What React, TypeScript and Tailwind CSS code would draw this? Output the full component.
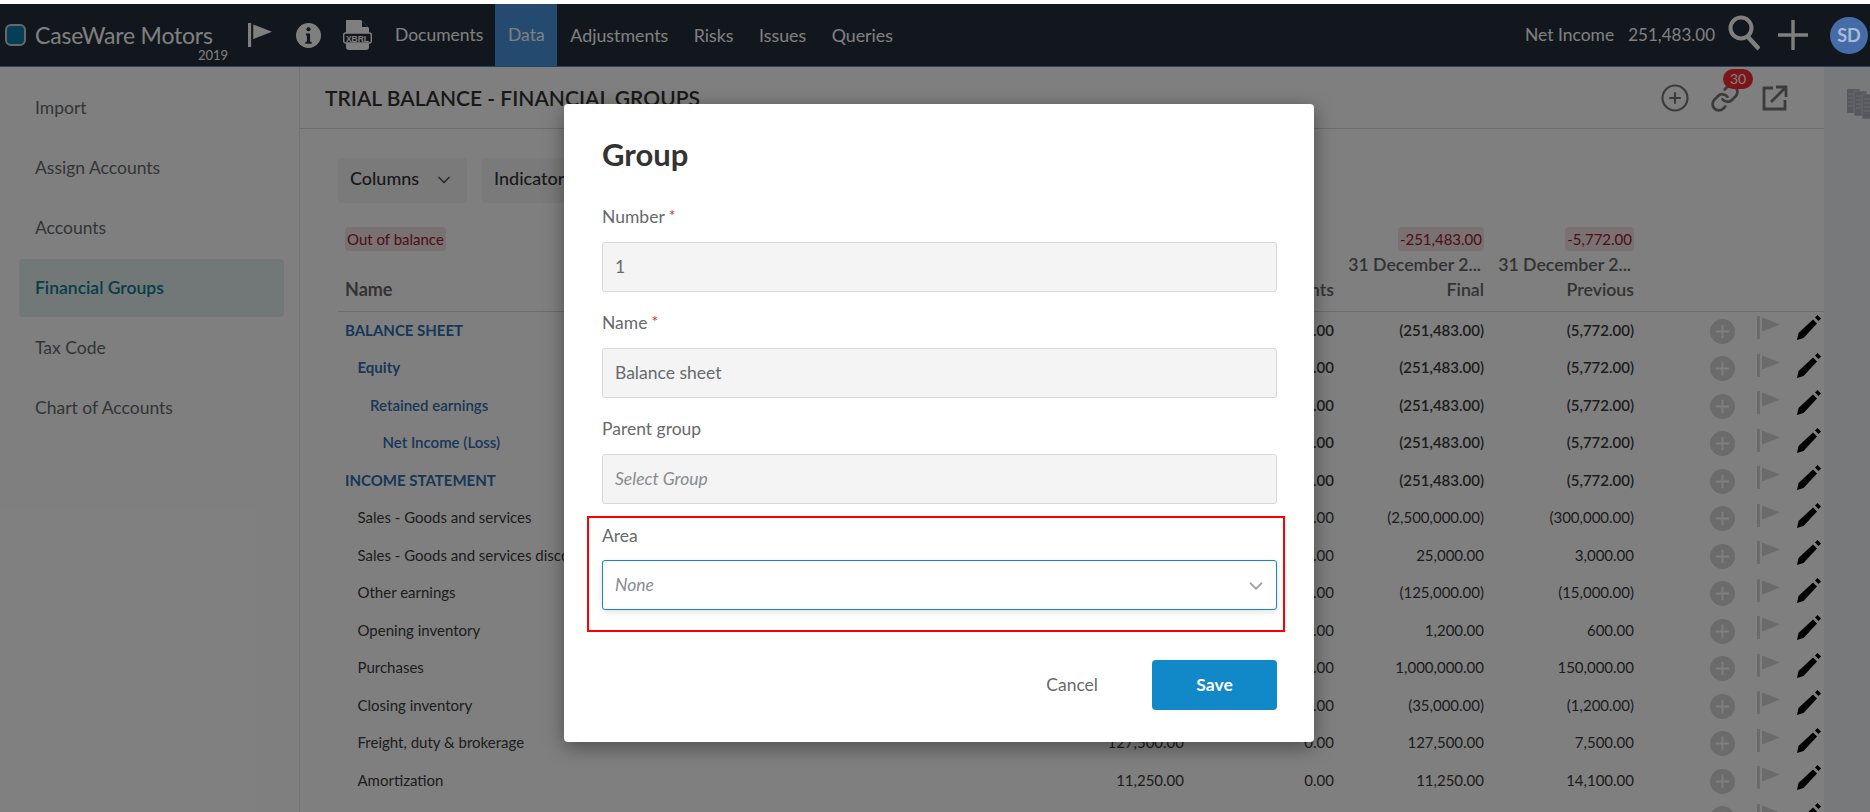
import React from 'react';
import { ChevronDown, CirclePlus, Link } from 'lucide-react';

const sideItems = ['Import', 'Assign Accounts', 'Accounts', 'Financial Groups', 'Tax Code', 'Chart of Accounts'];
const navItems = ['Adjustments', 'Risks', 'Issues', 'Queries'];

type Row = { name: string; level: number; kind: 'head' | 'sub' | 'link' | 'plain'; adj: string; final: string; prev: string; prelim?: string };

const rows: Row[] = [
  { name: 'BALANCE SHEET', level: 0, kind: 'head', adj: '0.00', final: '(251,483.00)', prev: '(5,772.00)' },
  { name: 'Equity', level: 1, kind: 'sub', adj: '0.00', final: '(251,483.00)', prev: '(5,772.00)' },
  { name: 'Retained earnings', level: 2, kind: 'link', adj: '0.00', final: '(251,483.00)', prev: '(5,772.00)' },
  { name: 'Net Income (Loss)', level: 3, kind: 'link', adj: '0.00', final: '(251,483.00)', prev: '(5,772.00)' },
  { name: 'INCOME STATEMENT', level: 0, kind: 'head', adj: '0.00', final: '(251,483.00)', prev: '(5,772.00)' },
  { name: 'Sales - Goods and services', level: 1, kind: 'plain', adj: '0.00', final: '(2,500,000.00)', prev: '(300,000.00)' },
  { name: 'Sales - Goods and services discounts', level: 1, kind: 'plain', adj: '0.00', final: '25,000.00', prev: '3,000.00' },
  { name: 'Other earnings', level: 1, kind: 'plain', adj: '0.00', final: '(125,000.00)', prev: '(15,000.00)' },
  { name: 'Opening inventory', level: 1, kind: 'plain', adj: '0.00', final: '1,200.00', prev: '600.00' },
  { name: 'Purchases', level: 1, kind: 'plain', adj: '0.00', final: '1,000,000.00', prev: '150,000.00' },
  { name: 'Closing inventory', level: 1, kind: 'plain', adj: '0.00', final: '(35,000.00)', prev: '(1,200.00)' },
  { name: 'Freight, duty & brokerage', level: 1, kind: 'plain', adj: '0.00', final: '127,500.00', prev: '7,500.00', prelim: '127,500.00' },
  { name: 'Amortization', level: 1, kind: 'plain', adj: '0.00', final: '11,250.00', prev: '14,100.00', prelim: '11,250.00' },
];

const FlagIcon = ({ className }: { className: string }) => (
  <svg viewBox="0 0 23 23" className={className} fill="currentColor">
    <rect x="0" y="0" width="3" height="23" />
    <path d="M5 1.5 L23 8.5 L5 15.5 Z" />
  </svg>
);

const DisabledPlus = () => (
  <svg viewBox="0 0 26 26" className="mt-[3px] h-[25px] w-[25px]">
    <circle cx="13" cy="13" r="13" fill="#d6d6d6" />
    <path d="M13 6v14M6 13h14" stroke="#ffffff" strokeWidth="2" />
  </svg>
);

const PencilIcon = () => (
  <svg viewBox="0 0 24 25" className="-mt-[4px] ml-[17px] h-[25px] w-[24px]" fill="#000000">
    <path d="M0 25 L1.5 18 L16 4.5 L20 8.5 L6.5 23 Z" />
    <path d="M18 2.5 L20.5 0 L24 3.5 L21.5 6 Z" />
  </svg>
);

const RowIcons = () => (
  <div className="ml-[76px] flex items-center">
    <DisabledPlus />
    <div className="-mt-[4px] ml-[22px] h-[23px] w-[23px] text-[#d6d6d6]">
      <FlagIcon className="h-[23px] w-[23px]" />
    </div>
    <PencilIcon />
  </div>
);

function nameClass(kind: Row['kind']) {
  if (kind === 'head') return 'font-bold text-[#2f6eb0] text-[15px]';
  if (kind === 'sub') return 'font-bold text-[#2f6eb0] text-[15px]';
  if (kind === 'link') return 'font-semibold text-[#2f6eb0] text-[15px]';
  return 'text-[#3a3a3a] text-[15px]';
}

function Field({ label, required, value, placeholder }: { label: string; required?: boolean; value?: string; placeholder?: string }) {
  return (
    <div className="h-[106px]">
      <div className="flex h-[25px] items-center pt-[2px] text-[17.5px] text-[#666a6e]">
        {label}
        {required && <span className="-mt-[5px] ml-[4px] text-[16px] text-[#e3242b]">*</span>}
      </div>
      <div className="mt-[13px] flex h-[50px] items-center rounded-[3px] border border-[#d5d9dd] bg-[#f4f4f4] px-[12px] text-[17.5px] text-[#666a6e]">
        {value ?? <span className="italic text-[#878c90]">{placeholder}</span>}
      </div>
    </div>
  );
}

export default function App() {
  return (
    <div className="relative h-[812px] w-[1870px] overflow-hidden bg-white pt-[4px] text-[#333] [font-family:Lato,'Open_Sans',sans-serif]">
      {/* Top bar */}
      <header className="flex h-[63px] items-center border-b border-[#4f88c4] bg-[#252c3a] pl-[5px] text-[#ffffff]">
        <div className="h-[22px] w-[21px] rounded-[6px] border-2 border-[#d0d0d0] bg-[#0a7cb0]" />
        <div className="relative ml-[9px] w-[193px]">
          <span className="text-[23px] tracking-[-0.2px] text-[#ffffff]">CaseWare Motors</span>
          <span className="absolute left-[163px] top-[28px] text-[13px]">2019</span>
        </div>
        <FlagIcon className="ml-[20px] h-[24px] w-[24px] text-white" />
        <svg viewBox="0 0 24 24" className="ml-[24px] h-[25px] w-[25px]">
          <circle cx="12" cy="12" r="12" fill="#ffffff" />
          <circle cx="12" cy="6" r="2" fill="#252c3a" />
          <path d="M9.5 10h4v8h1.5v2h-6v-2h1.5v-6h-1z" fill="#252c3a" />
        </svg>
        <svg viewBox="0 0 29 30" className="ml-[22px] h-[30px] w-[29px]">
          <path d="M3 0h15l8 8v5H3z M3 23h23v4a3 3 0 0 1-3 3H6a3 3 0 0 1-3-3z" fill="#ffffff" />
          <path d="M19 1v6h6z" fill="#252c3a" />
          <rect x="0.7" y="13" width="27.6" height="10" rx="2" fill="#252c3a" stroke="#ffffff" strokeWidth="1.4" />
          <text x="14.5" y="21.5" textAnchor="middle" fontSize="8.5" fontWeight="700" fill="#ffffff" fontFamily="Liberation Sans, sans-serif">XBRL</text>
        </svg>
        <span className="ml-[23px] text-[17.5px]">Documents</span>
        <span className="ml-[12px] flex h-full w-[62px] items-center justify-center bg-[#4a94de] text-[17.5px]">Data</span>
        <nav className="ml-[13px] flex gap-[25.5px] text-[17.8px]">
          {navItems.map(n => (
            <span key={n}>{n}</span>
          ))}
        </nav>
        <div className="ml-auto flex items-center pr-[2px]">
          <span className="text-[17.5px]">Net Income</span>
          <span className="ml-[14px] text-[17px]">251,483.00</span>
          <svg viewBox="0 0 32 36" className="-mt-[4px] ml-[13px] h-[36px] w-[32px]" fill="none" stroke="#ffffff">
            <circle cx="13" cy="13" r="10.5" strokeWidth="4" />
            <path d="M20 22l11 12" strokeWidth="4.5" />
          </svg>
          <svg viewBox="0 0 30 30" className="ml-[18px] h-[30px] w-[30px]" stroke="#ffffff" strokeWidth="3.4">
            <path d="M15 0v30M0 15h30" />
          </svg>
          <div className="relative z-10 ml-[22px] flex h-[37px] w-[38px] items-center justify-center rounded-full bg-[#466ca8] text-[18px] font-bold text-[#a8bcd8]">SD</div>
        </div>
      </header>

      <div className="flex h-[745px]">
        {/* Side menu */}
        <aside className="w-[300px] shrink-0 border-r border-[#e2e2e2] pl-[19px] pr-[15px] pt-[12px]">
          {sideItems.map(item => (
            <div
              key={item}
              className={`mb-[2px] flex h-[58px] items-center rounded-[4px] pl-[16px] text-[17.5px] ${item === 'Financial Groups' ? 'bg-[#e4f0f0] font-semibold text-[#0c7c8c]' : 'text-[#666a6e]'}`}
            >
              {item}
            </div>
          ))}
        </aside>

        {/* Main content */}
        <main className="min-w-0 flex-1">
          <div className="flex h-[62px] items-center border-b border-[#d8d8d8] pl-[25px]">
            <h1 className="text-[21px] font-semibold text-[#333]">TRIAL BALANCE - FINANCIAL GROUPS</h1>
            <div className="ml-auto mr-[36px] flex items-center">
              <CirclePlus size={30} strokeWidth={1.7} className="text-[#777]" />
              <div className="relative ml-[20px]">
                <Link size={30} strokeWidth={2.2} className="text-[#777]" />
                <span className="absolute -top-[14px] left-[13px] flex h-[20px] w-[30px] items-center justify-center rounded-full bg-[#f82830] text-[14px] text-white">30</span>
              </div>
              <svg viewBox="0 0 26 26" className="ml-[22px] h-[26px] w-[26px]" fill="none" stroke="#777" strokeWidth="2.8">
                <path d="M11 3H2v21h21v-9" />
                <path d="M9 17L24 2M14 2h10v10" />
              </svg>
            </div>
          </div>

          <div className="pl-[38px]">
            <div className="mt-[29px] flex h-[45px] gap-[15px]">
              <div className="flex w-[129px] items-center rounded-[4px] bg-[#f5f5f5] pb-[4px] pl-[12px] text-[18px] font-medium text-[#333]">
                Columns
                <ChevronDown size={20} className="ml-[15px] mt-[2px] text-[#555]" />
              </div>
              <div className="flex w-[140px] items-center rounded-[4px] bg-[#f5f5f5] pb-[4px] pl-[12px] text-[18px] font-medium text-[#333]">
                Indicators
              </div>
            </div>

            {/* Table head */}
            <div className="mt-[24px] flex h-[85px] border-b border-[#d8d8d8]">
              <div className="w-[696px] pl-[7px]">
                <span className="inline-block h-[24px] rounded-[4px] bg-[#f2e2e4] px-[2px] text-[15px] leading-[24px] text-[#98202c]">Out of balance</span>
                <div className="mt-[26px] text-[18px] leading-[25px] font-bold text-[#666]">Name</div>
              </div>
              {[
                ['', '31 December 2...', 'Preliminary'],
                ['', '', 'Adjustments'],
                ['-251,483.00', '31 December 2...', 'Final'],
                ['-5,772.00', '31 December 2...', 'Previous'],
              ].map(([bad, date, title]) => (
                <div key={title} className="flex w-[150px] flex-col items-end">
                  <span className={`h-[24px] rounded-[4px] px-[2px] text-[15px] leading-[24px] ${bad ? 'bg-[#f2e2e4] text-[#98202c]' : ''}`}>{bad}</span>
                  <span className="mt-[1px] h-[25px] pr-[3px] text-[17.7px] leading-[25px] font-semibold text-[#666]">{date}</span>
                  <span className="text-[17.7px] leading-[25px] font-semibold text-[#666]">{title}</span>
                </div>
              ))}
            </div>

            {/* Table rows */}
            <div className="-mt-[1px]">
              {rows.map(r => (
                <div key={r.name} className="flex h-[37.5px] items-center">
                  <div className={`w-[696px] whitespace-nowrap ${nameClass(r.kind)}`} style={{ paddingLeft: 7 + r.level * 12.5 }}>{r.name}</div>
                  <div className="w-[150px] text-right text-[15px] text-[#3a3a3a]">{r.prelim ?? r.final}</div>
                  <div className={`w-[150px] text-right text-[15px] text-[#3a3a3a] ${r.kind !== 'plain' ? 'font-semibold' : ''}`}>{r.adj}</div>
                  <div className={`w-[150px] text-right text-[15px] text-[#3a3a3a] ${r.kind !== 'plain' ? 'font-semibold' : ''}`}>{r.final}</div>
                  <div className={`w-[150px] text-right text-[15px] text-[#3a3a3a] ${r.kind !== 'plain' ? 'font-semibold' : ''}`}>{r.prev}</div>
                  <RowIcons />
                </div>
              ))}
              <div className="flex h-[37.5px] items-center pl-[1296px]">
                <RowIcons />
              </div>
            </div>
          </div>
        </main>

        {/* Right rail */}
        <div className="w-[46px] shrink-0 bg-[#eff2f5] pl-[23px] pt-[22px]">
          <svg viewBox="0 0 26 30" className="h-[30px] w-[26px]">
            <rect x="0" y="0" width="13" height="24" rx="1" fill="#aab0b8" />
            <rect x="7" y="2" width="13" height="25" rx="1" fill="#aab0b8" stroke="#eff2f5" strokeWidth="0.6" />
            <rect x="15" y="5" width="11" height="25" rx="1" fill="#aab0b8" stroke="#eff2f5" strokeWidth="0.6" />
            <path d="M1 5h5M1 9h5M1 13h5M1 17h5M9 7h5M9 11h5M9 15h5M9 19h5M17 10h9M17 14h9M17 18h9M17 22h9" stroke="#eff2f5" strokeWidth="0.6" />
          </svg>
        </div>
      </div>

      {/* Dialog */}
      <div className="absolute inset-x-0 bottom-0 top-[4px] bg-black/50" />
      <div className="absolute left-[564px] top-[104px] h-[638px] w-[750px] rounded-[4px] bg-white pl-[38px] pr-[37px] shadow-[0_5px_20px_rgba(0,0,0,0.4)]">
        <h2 className="mt-[31px] text-[31px] leading-[38px] font-bold text-[#333]">Group</h2>
        <div className="mt-[31px]">
          <Field label="Number" required value="1" />
          <Field label="Name" required value="Balance sheet" />
          <Field label="Parent group" placeholder="Select Group" />
        </div>
        <div className="-ml-[15px] -mr-[8px] -mt-[6px] h-[116px] border-2 border-[#ff0000] pl-[13px] pr-[6px]">
          <div className="mt-[5px] flex h-[25px] items-center pt-[2px] text-[17.5px] text-[#666a6e]">Area</div>
          <div className="mt-[12px] flex h-[50px] items-center justify-between rounded-[3px] border border-[#1288c8] bg-white px-[12px] text-[17.5px] italic text-[#878c90] shadow-[0_2px_6px_rgba(0,0,0,0.12)]">
            None
            <ChevronDown size={22} className="-mr-[3px] mt-[2px] text-[#a0a4a8]" />
          </div>
        </div>
        <div className="mt-[28px] flex items-center justify-end">
          <span className="text-[17.5px] text-[#666a6e]">Cancel</span>
          <button className="ml-[54px] h-[50px] w-[125px] rounded-[4px] bg-[#1188c8] text-[17.5px] font-bold text-white">Save</button>
        </div>
      </div>
    </div>
  );
}
